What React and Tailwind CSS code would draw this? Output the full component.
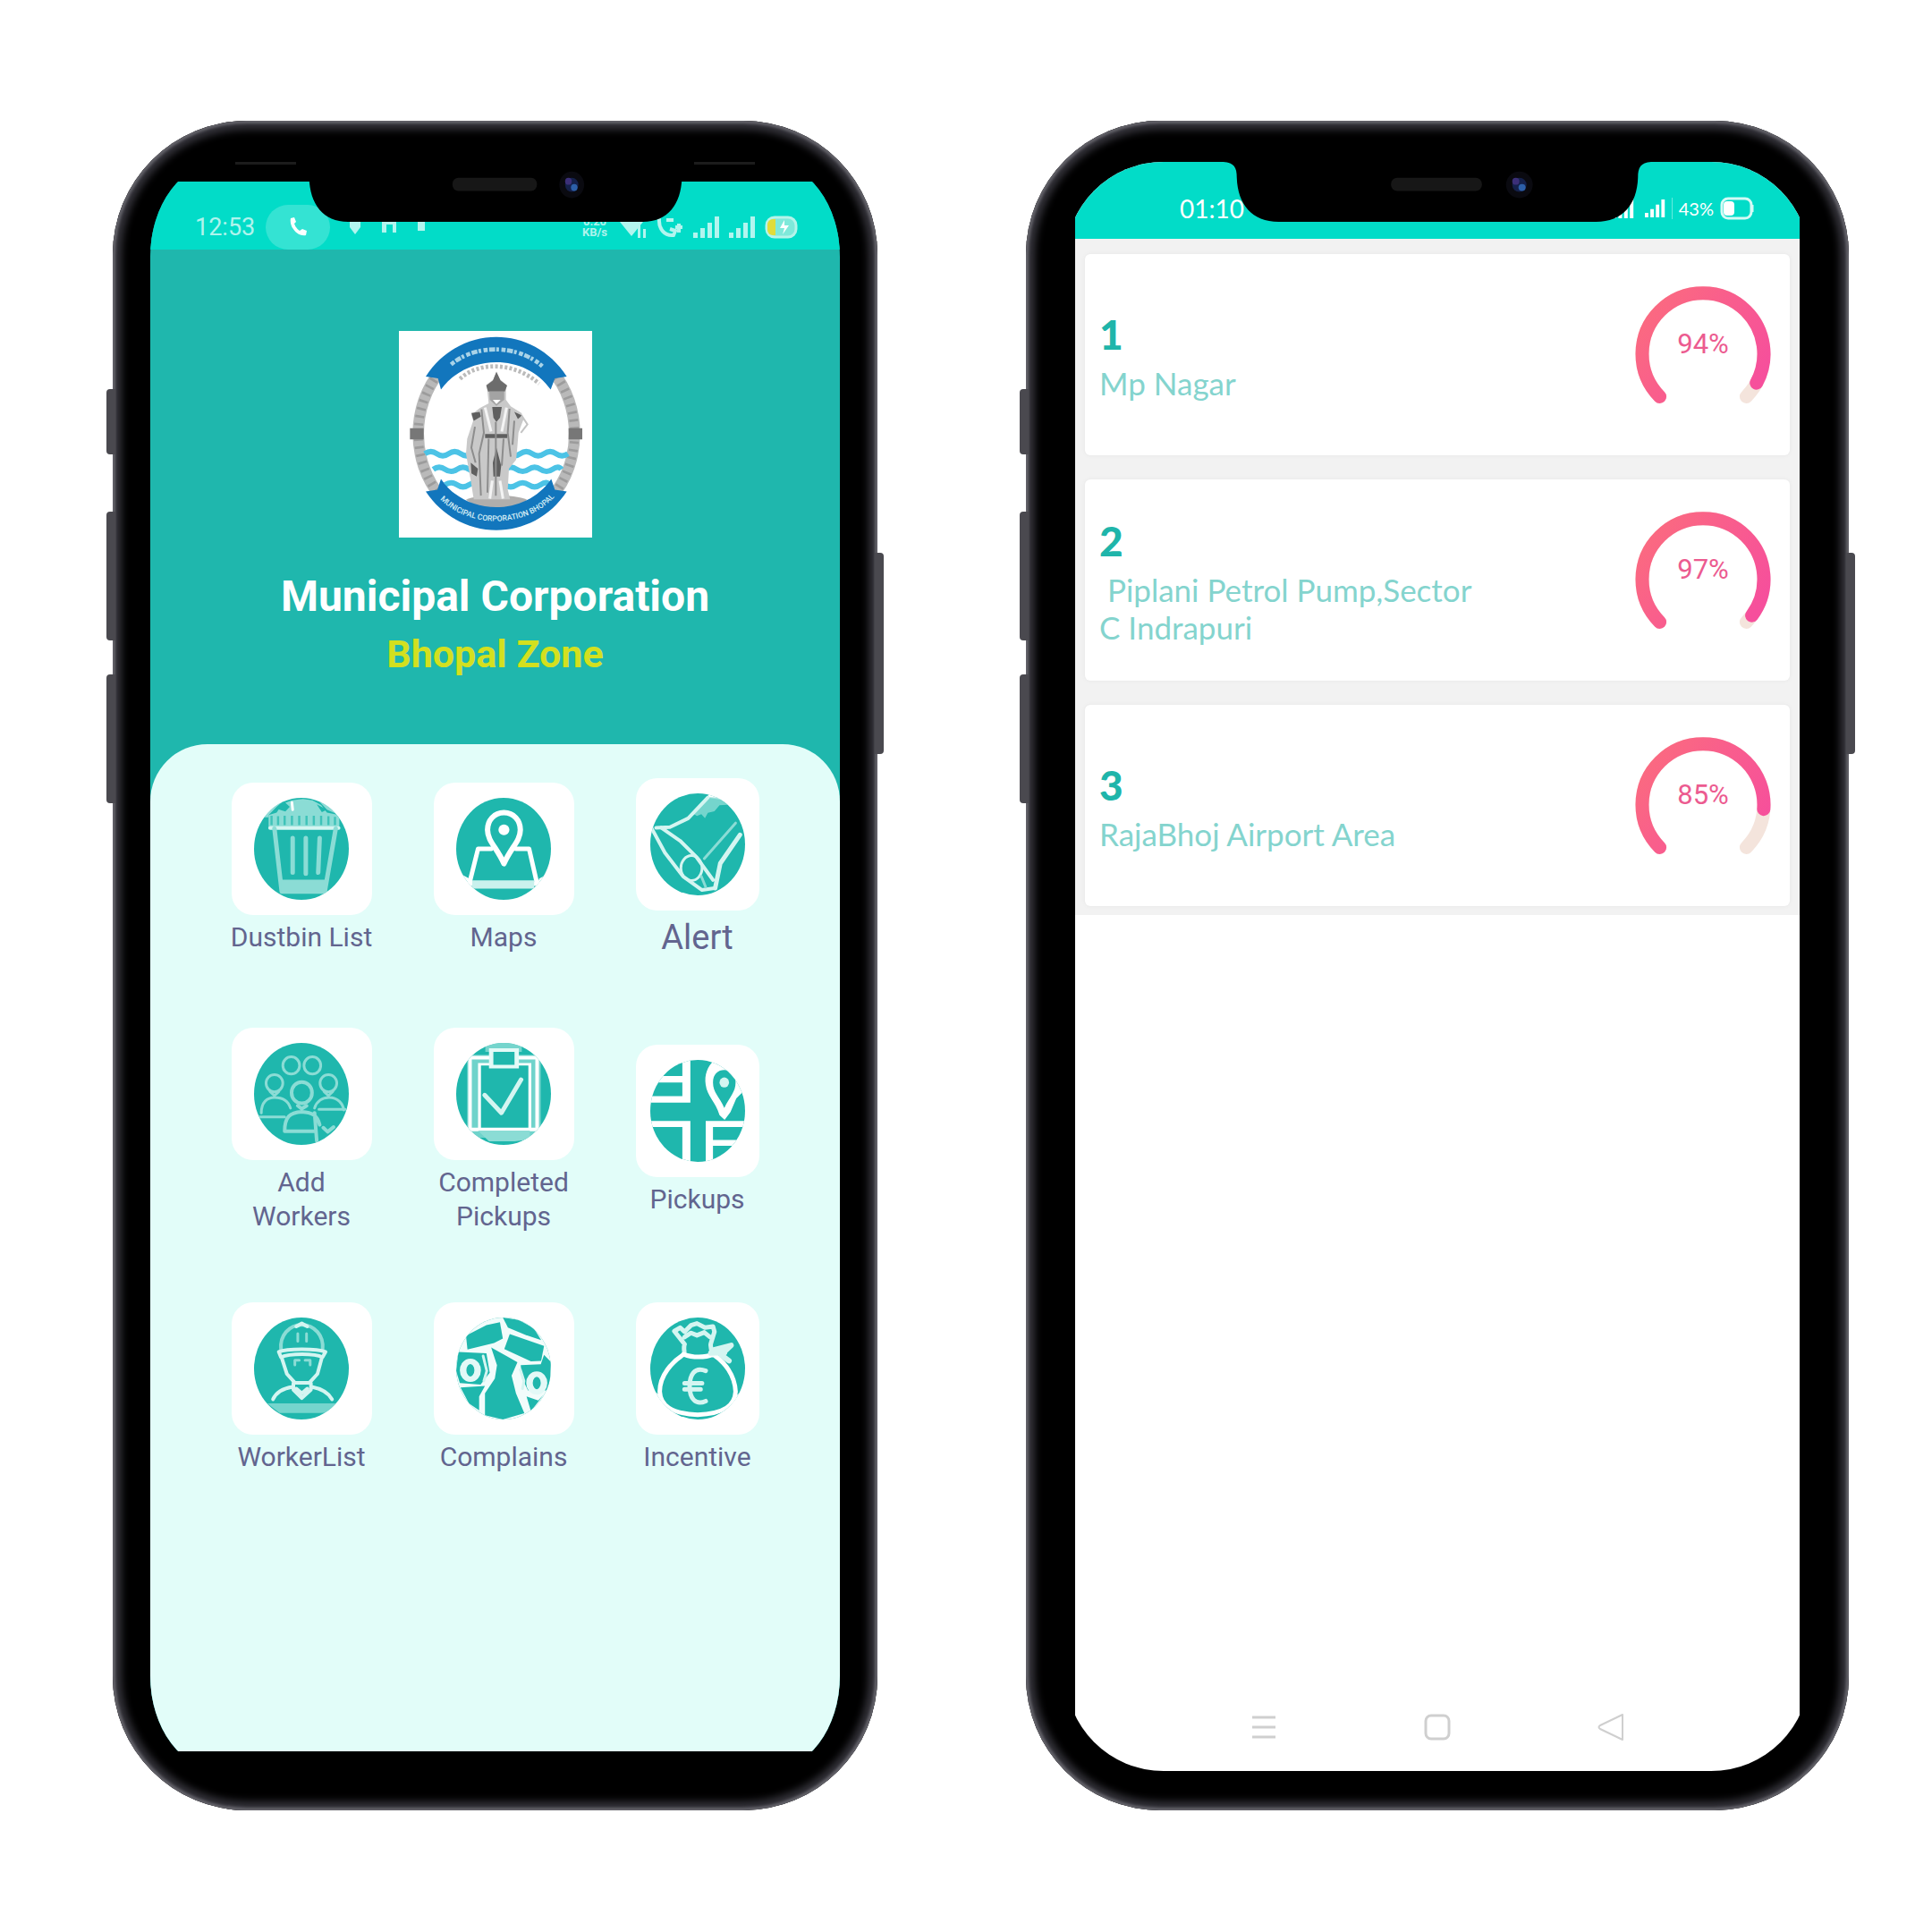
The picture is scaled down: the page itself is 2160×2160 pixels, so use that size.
import React from "react";

const line = {
  fill: "none",
  stroke: "#d4f5f1",
  strokeWidth: 3,
  strokeLinecap: "round",
  strokeLinejoin: "round",
  vectorEffect: "non-scaling-stroke",
};
const soft = { ...line, stroke: "#8bdcd5" };
const white = { ...line, stroke: "#ffffff" };

/* Line drawings laid over the teal disc; the disc fills a 260 x 344 box. */
const glyphs = {
  dustbin: (
    <g>
      <path d="M0 0H90L62 30L40 58V66H0ZM170 0H260V66H234V58L200 40Z" fill="#fff" opacity=".5" />
      <path d="M40 58L62 50L78 20L104 8L134 4L160 8L184 24L200 50L234 58V104H40Z" fill="#8bdcd5" />
      <path d="M60 36L84 14L98 30L86 46ZM172 22L200 40L186 48Z" fill="#1fb7ad" />
      <path {...white} d="M104 16L106 40" />
      <path d="M48 60V92M66 62V92M84 60V92M104 60V92M124 60V92M144 60V92M164 60V92M184 60V92M204 62V92M222 64V92" stroke="#3fc3b9" strokeWidth="6" />
      <path {...line} d="M44 102H232" strokeWidth="4" />
      <path {...soft} strokeWidth="5" d="M56 104L76 316H194L224 104" />
      <path d="M76 276H200V322H76Z" fill="#8bdcd5" />
      <path {...soft} strokeWidth="5" d="M106 136V252M142 136V256M180 136L176 252" />
    </g>
  ),
  map: (
    <g>
      <path {...white} strokeWidth="5" d="M96 172H60L36 290H222L200 172H164" />
      <path d="M44 278H214V306H44Z" fill="#c9f1ed" />
      <path d="M0 280L20 262L36 272L54 344H0ZM260 280L244 262L228 272L206 344H260Z" fill="#fff" />
      <path {...white} strokeWidth="6" fill="#1fb7ad" d="M131 222C112 168 86 146 86 108C86 76 104 50 131 50C158 50 176 76 176 108C176 146 150 168 131 222Z" />
      <ellipse cx="131" cy="108" rx="15" ry="18" fill="#fff" />
    </g>
  ),
  alert: (
    <g>
      <path d="M160 0H260V60L226 36L196 22L158 14Z" fill="#fff" />
      <path d="M156 12L182 14L214 28L222 38L190 40L176 60L158 66L150 84L140 70L128 76L120 70Z" fill="#8bdcd5" opacity=".8" />
      <path {...line} strokeWidth="4" d="M158 14L104 84L54 114L16 116" />
      <path {...line} strokeWidth="4" d="M30 116L82 160L126 214L172 292" />
      <path {...line} strokeWidth="4" d="M4 118L40 200L90 280L142 326L176 320" />
      <ellipse {...line} cx="113" cy="252" rx="29" ry="42" />
      <path {...soft} d="M148 220L234 100M140 280L152 316" />
      <path {...line} strokeWidth="5" d="M246 140L192 236L178 320" />
    </g>
  ),
  workers: (
    <g>
      {[[102, 76], [160, 76], [56, 136], [204, 136]].map(([x, y]) => (
        <ellipse key={x} {...soft} cx={x} cy={y} rx="23" ry="29" />
      ))}
      <ellipse {...soft} cx="131" cy="168" rx="28" ry="36" strokeWidth="4" />
      <path {...soft} d="M44 164L56 178L68 164M192 164L204 178L216 164M20 236C20 200 36 184 56 184C78 184 94 196 100 220M166 220C172 196 188 184 206 184C230 184 244 206 246 226M14 250H84M178 224H250" />
      <path {...soft} strokeWidth="4" d="M84 298C84 250 98 234 131 232C160 234 174 246 180 276M84 298H168M166 236L172 330M120 212L131 222L144 212M190 286L202 300L218 284" />
      <path d="M180 344L196 320L260 260V344Z" fill="#fff" opacity=".8" />
    </g>
  ),
  clipboard: (
    <g>
      <path d="M30 40H232V320H30Z" fill="#8bdcd5" opacity=".75" />
      <path {...white} strokeWidth="4" d="M90 50H38V292H222V50H170" />
      <path d="M64 72H202V290H64Z" fill="#1fb7ad" stroke="#fff" strokeWidth="8" />
      <path d="M60 296H202V326L160 332H90Z" fill="#8bdcd5" />
      <path d="M80 0H180V30H80Z" fill="#8bdcd5" opacity=".8" />
      <path d="M96 24H166V80H96Z" fill="#1fb7ad" stroke="#e3faf7" strokeWidth="12" />
      <path {...line} strokeWidth="5" d="M78 176L124 236L178 124" />
    </g>
  ),
  pickups: (
    <g>
      <path d="M88 0H110V144H0V122H88V76H0V54H88ZM0 206H110V344H88V226H0ZM152 206H260V226H172V270H260V290H172V344H152Z" fill="#fff" />
      <path d="M176 0C156 24 148 50 152 84C156 122 178 140 190 186L204 202L220 176L236 130L260 100V0Z" fill="#fff" />
      <path d="M203 162C190 124 172 110 172 76C172 48 186 34 203 34C222 34 234 50 234 76C234 108 218 124 203 162Z" fill="#1fb7ad" />
      <ellipse cx="203" cy="76" rx="13" ry="17" fill="#d4f5f1" />
    </g>
  ),
  worker: (
    <g>
      <path {...soft} strokeWidth="4" d="M74 108C70 60 96 26 131 24C166 26 192 60 188 108" />
      <path {...line} strokeWidth="4" d="M116 30L131 20L146 30M68 116C90 104 172 104 196 116L188 134C166 120 98 120 74 134ZM76 136L90 190L112 220H152L174 190L186 136" />
      <path {...soft} d="M120 54V80M144 54V80M112 160V144H124M140 144H154V160" />
      <path {...line} strokeWidth="4" d="M108 222V244L131 272L156 244V222M52 276C62 250 84 238 106 234M158 234C184 240 204 254 214 276M116 240L131 256L146 240" />
      <path d="M36 290H226V320L180 322H70Z" fill="#8bdcd5" opacity=".8" />
    </g>
  ),
  complains: (
    <g>
      <rect width="260" height="344" fill="#f2fcfb" />
      <g fill="#1fb7ad">
        <path d="M27 61L83 26L120 16L128 71L104 86L31 108Z" />
        <path d="M128 0L172 8L213 36L233 76L189 58L142 34Z" />
        <path d="M147 56L241 96L233 146L205 148L132 106Z" />
        <path d="M96 101L140 131L168 151L152 196L164 256L187 323L128 344L79 330L79 256L106 206L112 161Z" />
        <path d="M6 116L83 121L92 186L67 226L10 221L0 180Z" />
        <path d="M12 236L79 231L63 266V313L35 290Z" />
        <path d="M177 161L232 158L241 126L260 150L256 246H197L181 206Z" />
        <path d="M193 266L225 280L240 260L205 316Z" />
      </g>
      <ellipse cx="39" cy="178" rx="20" ry="30" fill="none" stroke="#e3f9f7" strokeWidth="18" />
      <ellipse cx="221" cy="221" rx="20" ry="30" fill="none" stroke="#e3f9f7" strokeWidth="18" />
      <path {...line} d="M74 130L84 180L76 214M176 176L186 214L182 240" />
    </g>
  ),
  money: (
    <g>
      <path d="M0 238L34 270L50 318L100 344H0ZM260 238L230 270L212 318L164 344H260Z" fill="#fff" />
      <path {...line} strokeWidth="5" d="M94 90L66 46L82 34L94 48L112 26L128 20L150 34L172 30L176 48L166 88M94 66L112 52L128 60L148 50L164 66M94 90C90 108 96 116 92 122M166 88C164 104 168 114 172 124" />
      <path {...white} strokeWidth="5" d="M92 124C60 150 26 194 26 250C28 296 56 324 130 328C204 324 232 296 234 250C232 194 204 150 172 124C150 136 116 136 92 124Z" />
      <path {...line} strokeWidth="6" d="M172 110L222 94L194 126L216 146M166 120L204 118" />
      <path {...line} strokeWidth="5" d="M152 180C120 164 108 196 108 232C108 272 124 298 152 282M94 222H142M94 242H138" />
    </g>
  ),
};

function DiscIcon({ name }) {
  return (
    <svg className="h-[114px] w-[106px]" viewBox="0 0 260 344" preserveAspectRatio="none" aria-hidden="true">
      <defs>
        <clipPath id={`disc-${name}`}>
          <ellipse cx="130" cy="172" rx="130" ry="172" />
        </clipPath>
      </defs>
      <g clipPath={`url(#disc-${name})`}>
        <rect width="260" height="344" fill="#1fb7ad" />
        {glyphs[name]}
      </g>
    </svg>
  );
}

const tiles = [
  { icon: "dustbin", label: "Dustbin List" },
  { icon: "map", label: "Maps" },
  { icon: "alert", label: "Alert", large: true },
  { icon: "workers", label: "Add Workers" },
  { icon: "clipboard", label: "Completed Pickups" },
  { icon: "pickups", label: "Pickups" },
  { icon: "worker", label: "WorkerList" },
  { icon: "complains", label: "Complains" },
  { icon: "money", label: "Incentive" },
];

const areas = [
  { rank: 1, name: "Mp Nagar", percent: 94 },
  { rank: 2, name: " Piplani Petrol Pump,Sector C Indrapuri", percent: 97 },
  { rank: 3, name: "RajaBhoj Airport Area", percent: 85 },
];

function Signal({ className }) {
  return (
    <svg className={className} viewBox="0 0 30 24" preserveAspectRatio="none" fill="currentColor" aria-hidden="true">
      <path d="M0 18H5V24H0ZM8 13H13V24H8ZM16 7H21V24H16ZM24 0H29V24H24Z" />
    </svg>
  );
}

function Notch() {
  return (
    <svg className="absolute left-1/2 top-0 h-[67px] w-[52%] -translate-x-1/2" viewBox="0 0 480 68" preserveAspectRatio="none" aria-hidden="true">
      <path d="M0 -2V0C12 1 15 6 15 18C16 48 32 68 62 68H418C448 68 464 48 465 18C465 6 468 1 480 0V-2Z" fill="#000" />
      <rect x="188" y="18" width="102" height="15" rx="7" fill="#171717" />
      <circle cx="332" cy="26" r="15" fill="#0a0a10" />
      <circle cx="332" cy="26" r="8" fill="#14204a" />
      <circle cx="328" cy="22" r="4" fill="#3b2f78" />
      <circle cx="335" cy="29" r="4" fill="#2c5fa8" />
    </svg>
  );
}

function Phone({ children }) {
  const key = "absolute w-[10px] bg-[#4a494f]";
  return (
    <section className="relative flex flex-col rounded-[150px] bg-black pb-[44px] pt-[46px] shadow-[inset_0_0_3px_3px_#64636a,inset_0_0_9px_10px_#34333a]">
      <span className={`${key} -left-[7px] top-[300px] h-[73px] rounded-l-sm`} />
      <span className={`${key} -left-[7px] top-[437px] h-[144px] rounded-l-sm`} />
      <span className={`${key} -left-[7px] top-[619px] h-[144px] rounded-l-sm`} />
      <span className={`${key} -right-[7px] top-[483px] h-[225px] rounded-r-sm`} />
      <div className="relative flex grow flex-col overflow-hidden">
        {children}
        <Notch />
      </div>
    </section>
  );
}

function Emblem() {
  return (
    <svg className="h-[231px] w-[216px] bg-white" viewBox="75 60 648 690" preserveAspectRatio="none" role="img" aria-label="Municipal emblem">
      <ellipse cx="402" cy="403" rx="262" ry="300" fill="none" stroke="#b9b9b9" strokeWidth="38" />
      <ellipse cx="402" cy="403" rx="262" ry="300" fill="none" stroke="#9c9c9c" strokeWidth="30" strokeDasharray="8 18" />
      <path d="M112 385H158V422H112ZM644 385H690V422H644Z" fill="#777" />
      <g fill="none" stroke="#4cc3e6" strokeWidth="18">
        <path d="M162 470q20 -14 40 0t40 0t40 0t40 0t40 0t40 0t40 0t40 0t40 0t40 0t40 0t40 0" />
        <path d="M190 522q20 -14 40 0t40 0t40 0t40 0t40 0t40 0t40 0t40 0t40 0t40 0t30 0" />
        <path d="M230 574q20 -14 40 0t40 0t40 0t40 0t40 0t40 0t40 0t40 0t30 0" />
      </g>
      <path d="M300 624C340 604 460 604 505 624C470 660 340 660 300 624Z" fill="#b0aeac" />
      <path d="M402 200L414 222L436 240L434 262V290L450 312L486 334L494 352L476 400L472 450L468 490L444 520L440 590L448 622H326L316 560L300 470L304 420L324 360L318 340L346 318L376 302L372 262L368 240L392 222Z" fill="#c9c9c9" />
      <path d="M402 196L416 226L438 242L430 262H374L368 242L390 226Z" fill="#6c6c6c" />
      <path d="M378 262H428V290L402 310L380 290Z" fill="#a3a3a3" />
      <path d="M390 290H416L402 304Z" fill="#fff" />
      <path d="M388 314H420L414 350L402 364L392 350ZM318 334L346 330L350 346L326 360ZM462 330L488 342L474 354ZM364 404H438V418H364ZM316 500L340 520L336 546L318 536ZM390 500L402 450L418 510L414 546H392Z" fill="#5f5f5f" />
      <path d="M352 322L360 400L344 470L350 610M446 320L440 400L450 480M400 364V610M376 420L372 600M426 420L420 510M330 380L318 450L332 500M462 360L456 440" fill="none" stroke="#8d8d8d" strokeWidth="6" />
      <path d="M486 342L506 372L484 400" fill="none" stroke="#c4c4c4" strokeWidth="6" />
      <path d="M364 316L384 396M436 316L420 396M388 560L380 620M414 560L424 620" fill="none" stroke="#f4f4f4" strokeWidth="9" />
      <path d="M280 220C340 162 462 162 545 236" fill="none" stroke="#bbb" strokeWidth="14" strokeDasharray="9 7" />
      <path d="M165 212C280 36 524 36 638 212L598 218L584 256C500 134 304 134 216 256L206 218Z" fill="#1276bd" />
      <path d="M250 172C330 104 474 104 556 178" fill="none" stroke="#a9d3e8" strokeWidth="14" strokeDasharray="14 5 20 4 9 8" />
      <path d="M165 596L204 590L216 554C300 680 500 680 586 554L598 590L638 596C524 768 280 768 165 596Z" fill="#1276bd" />
      <path id="emblem-arc" d="M204 612C300 724 510 724 606 604" fill="none" />
      <text fill="#d6eef5" fontSize="26" fontFamily="Roboto, sans-serif" fontWeight="500">
        <textPath href="#emblem-arc" startOffset="50%" textAnchor="middle">MUNICIPAL CORPORATION BHOPAL</textPath>
      </text>
    </svg>
  );
}

function HomeStatusBar() {
  return (
    <div className="flex h-[76px] items-end justify-between bg-[#02dcc8] pl-[50px] pr-[46px] text-white/70">
      <div className="flex items-center">
        <span className="text-[27px] leading-[50px]">12:53</span>
        <span className="ml-3 flex h-[50px] w-[72px] items-center justify-center rounded-full bg-white/20">
          <svg className="h-[26px] w-[26px]" viewBox="0 0 26 26" fill="none" aria-hidden="true">
            <path d="M5 3C3 12 12 24 22 22L23 17L18 15L15 17C12 15 10 12 9 9L11 7L9 2Z" fill="#fff" />
          </svg>
        </span>
        <svg className="ml-5 h-[24px] w-[90px]" viewBox="0 0 90 24" fill="currentColor" aria-hidden="true">
          <path d="M2 2H14V12L8 20L2 12ZM38 4H54V18H50V9H43V18H38ZM78 4H86V16H78Z" />
        </svg>
      </div>
      <div className="flex h-[50px] items-center gap-[10px]">
        <span className="flex w-[32px] flex-col items-center text-[13px] font-bold leading-[12px]">
          <span>0.20</span>
          <span>KB/s</span>
        </span>
        <svg className="h-[24px] w-[32px]" viewBox="0 0 32 24" fill="currentColor" aria-hidden="true">
          <path d="M2 6Q14 -4 28 6L15 22ZM22 10H25V24H22ZM28 14H31V24H28Z" />
        </svg>
        <svg className="h-[24px] w-[32px]" viewBox="0 0 32 24" fill="none" stroke="currentColor" strokeWidth="4" aria-hidden="true">
          <path d="M4 2C3 14 10 22 20 21L22 16L16 14M12 4H20M26 8V18M22 12H30" />
        </svg>
        <Signal className="h-[24px] w-[30px]" />
        <Signal className="h-[24px] w-[30px]" />
        <svg className="h-[26px] w-[38px]" viewBox="0 0 38 26" aria-hidden="true">
          <rect x="2" y="2" width="33" height="22" rx="9" fill="#7fe9da" stroke="#b5f4ea" strokeWidth="3" />
          <path d="M12 4V22H9A6 6 0 0 1 3 16V10A6 6 0 0 1 9 4Z" fill="#e0dc3a" />
          <path d="M22 5L17 14H22L20 21L27 11H22Z" fill="#fff" />
        </svg>
      </div>
    </div>
  );
}

function HomeScreen() {
  return (
    <div className="relative mx-[42px] flex grow flex-col overflow-hidden rounded-[80px_/_106px] py-[22px] font-['Roboto',sans-serif]">
      <div className="flex grow flex-col bg-[#1fb7ad]">
        <HomeStatusBar />
        <header className="flex flex-col items-center pb-[71px] pt-[91px] font-bold">
          <Emblem />
          <h1 className="mt-[36px] text-[48px] leading-[60px] text-white">Municipal Corporation</h1>
          <p className="mt-[4px] text-[43px] leading-[60px] text-[#d3e01f]">Bhopal Zone</p>
        </header>
        <main className="grid grow auto-rows-max grid-cols-[157px_157px_138px] items-center justify-center gap-x-[69px] gap-y-[77px] rounded-t-[64px] bg-[#e2fdf9] pt-[38px]">
          {tiles.map((t) => (
            <button key={t.label} type="button" className="flex flex-col items-center gap-[6px] text-[#62658f]">
              <span className="flex h-[148px] w-full items-center justify-center rounded-3xl bg-white">
                <DiscIcon name={t.icon} />
              </span>
              <span className={t.large ? "text-[38px] leading-[48px]" : "-mx-1 text-[30px] leading-[38px]"}>{t.label}</span>
            </button>
          ))}
        </main>
      </div>
    </div>
  );
}

function Gauge({ percent }) {
  const arc = "M27.6 124.4A68 68 0 1 1 124.4 124.4";
  return (
    <div className="grid h-[152px] w-[152px] shrink-0 place-items-center">
      <svg className="col-start-1 row-start-1 h-full w-full" viewBox="0 0 152 152" fill="none" strokeWidth="15" strokeLinecap="round" aria-hidden="true">
        <defs>
          <linearGradient id="gauge" x1="0" y1="0.2" x2="1" y2="0.8">
            <stop offset="0" stopColor="#fb6a80" />
            <stop offset="1" stopColor="#f64f9c" />
          </linearGradient>
        </defs>
        <path d={arc} stroke="#f4e4dc" />
        <path d={arc} stroke="url(#gauge)" pathLength="100" strokeDasharray={`${percent} 200`} />
      </svg>
      <span className="col-start-1 row-start-1 pb-5 font-['Roboto',sans-serif] text-[31px] leading-9 text-[#ec5b90]">{percent}%</span>
    </div>
  );
}

function ListScreen() {
  return (
    <div className="relative mx-[44px] flex grow flex-col overflow-hidden rounded-[110px] px-[11px] font-['Lato',sans-serif]">
      <div className="flex grow flex-col bg-white">
        <div className="flex h-[86px] items-center justify-between bg-[#02dcc8] pl-[117px] pr-[51px] pt-[18px] text-white">
          <span className="text-[28px] leading-8">01:10</span>
          <span className="flex items-center gap-[7px]">
            <Signal className="mr-[5px] h-[22px] w-[24px]" />
            <Signal className="h-[20px] w-[23px]" />
            <span className="h-[24px] w-px bg-white/40" />
            <span className="text-[20px] leading-6">43%</span>
            <svg className="h-[26px] w-[38px]" viewBox="0 0 38 26" aria-hidden="true">
              <rect x="2" y="2" width="33" height="22" rx="7" fill="none" stroke="#d5faf5" strokeWidth="3" />
              <path d="M36 9V17" stroke="#d5faf5" strokeWidth="3" />
              <rect x="4" y="5" width="12" height="16" rx="4" fill="#fff" />
            </svg>
          </span>
        </div>
        <ul className="flex flex-col gap-[27px] bg-[#f2f2f2] px-[11px] pb-[10px] pt-[17px]">
          {areas.map((a) => (
            <li key={a.rank} className="flex h-[225px] items-center justify-between rounded-md bg-white pb-[4px] pl-[16px] pr-[21px] shadow-[0_0_4px_#e6e6e6]">
              <div className="max-w-[430px]">
                <h2 className="text-[46px] font-black leading-[66px] text-[#1fb5aa]">{a.rank}</h2>
                <p className="whitespace-pre-wrap text-[35px] leading-[42px] text-[#84d4ce]">{a.name}</p>
              </div>
              <Gauge percent={a.percent} />
            </li>
          ))}
        </ul>
        <nav className="mt-auto flex justify-center gap-[164px] pb-[34px] text-[#cfcfcf]">
          <button type="button" aria-label="Recent apps">
            <svg className="h-[30px] w-[30px]" viewBox="0 0 30 30" stroke="currentColor" strokeWidth="3" aria-hidden="true">
              <path d="M2 4H28M2 15H28M2 26H28" />
            </svg>
          </button>
          <button type="button" aria-label="Home">
            <svg className="h-[30px] w-[30px]" viewBox="0 0 30 30" fill="none" stroke="currentColor" strokeWidth="3" aria-hidden="true">
              <rect x="2" y="2" width="26" height="26" rx="6" />
            </svg>
          </button>
          <button type="button" aria-label="Back">
            <svg className="h-[30px] w-[30px]" viewBox="0 0 30 30" fill="none" stroke="currentColor" strokeWidth="2" strokeLinejoin="round" aria-hidden="true">
              <path d="M28 1V29L3 17Q0 15 3 13Z" />
            </svg>
          </button>
        </nav>
      </div>
    </div>
  );
}

export default function App() {
  return (
    <div className="grid min-h-screen grid-cols-[855fr_920fr] gap-[166px] bg-white pb-[136px] pl-[126px] pr-[93px] pt-[135px]">
      <Phone>
        <HomeScreen />
        <span className="absolute left-[16%] top-0 h-[3px] w-[8%] bg-[#1c1c1c]" />
        <span className="absolute right-[16%] top-0 h-[3px] w-[8%] bg-[#1c1c1c]" />
      </Phone>
      <Phone>
        <ListScreen />
      </Phone>
    </div>
  );
}
